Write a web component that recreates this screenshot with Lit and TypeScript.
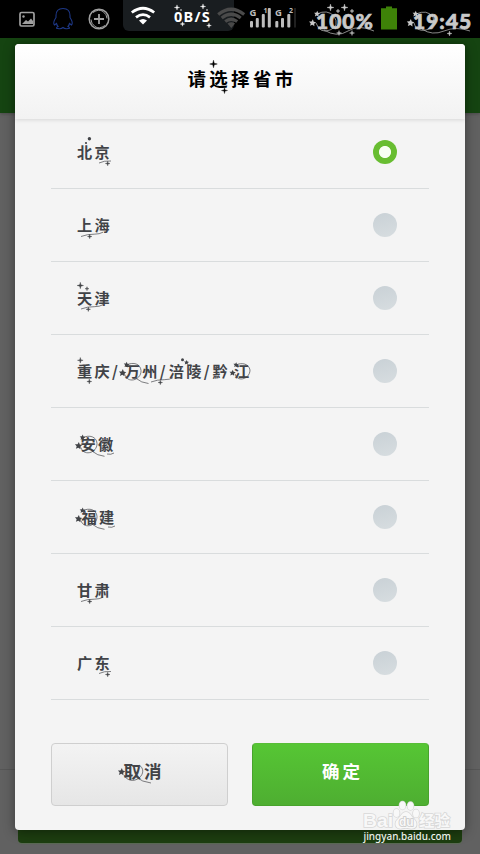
import { LitElement, html, svg, css } from "lit";
import { customElement, state } from "lit/decorators.js";

const spark = (x: number, y: number, r: number) => {
  const q = r * 0.2;
  return svg`<path d="M${x} ${y - r}L${x + q} ${y - q}L${x + r} ${y}L${x + q} ${y + q}L${x} ${y + r}L${x - q} ${y + q}L${x - r} ${y}L${x - q} ${y - q}Z" stroke="currentColor" stroke-width=".4"/>`;
};
const star = (x: number, y: number, r: number) => {
  const pts = Array.from({ length: 10 }, (_, i) => {
    const a = -Math.PI / 2 + 0.1 + (i * Math.PI) / 5;
    const k = i % 2 ? r * 0.48 : r;
    return `${(x + k * Math.cos(a)).toFixed(2)},${(y + k * Math.sin(a)).toFixed(2)}`;
  });
  return svg`<polygon points=${pts.join(" ")}/>`;
};
const dot = (x: number, y: number, r: number) => svg`<circle cx=${x} cy=${y} r=${r}/>`;
const line = (d: string) => svg`<path class="thin" d=${d}/>`;
const swoosh = (x: number, y: number, w: number) =>
  line(`M${x} ${y}q${w * 0.3} -2.5 ${w * 0.6} -2.3q${w * 0.25} 0 ${w * 0.4} -2`);
const orbit = (x: number, y: number) => svg`
  ${star(x, y, 3.9)}${star(x + 4, y - 8.2, 3)}
  ${line(`M${x + 4} ${y - 8}c7 -3.500 14 -1 14.500 5.500c.4 5 -4 9.500 -9 9.500c-4 0 -6 -2 -8 -7`)}
  ${line(`M${x + 13} ${y + 5}q6 5 13 5.500`)}`;

interface Region {
  parts: { text: string; lead: number }[];
  art: unknown;
}

const regions: Region[] = [
  { parts: [{ text: "北京", lead: 0 }], art: [dot(38.4, 22.7, 1.7), dot(35, 27, 1.1), line("M48 47q5 -2.500 12 -2"), spark(56.7, 47.5, 2.3)] },
  { parts: [{ text: "上海", lead: 0 }], art: [swoosh(30, 47.5, 22), spark(38.7, 47.5, 2.2)] },
  { parts: [{ text: "天津", lead: 0 }], art: [spark(29.3, 23.5, 3.2), spark(36, 26.7, 2), swoosh(30, 47, 22), spark(37.3, 47.3, 2.2)] },
  {
    parts: [{ text: "重庆/", lead: 0 }, { text: "万州/", lead: 4.5 }, { text: "涪陵/", lead: 1 }, { text: "黔", lead: 0.5 }, { text: "江", lead: 4 }],
    art: [
      spark(29.3, 25.3, 2.8), spark(38.3, 46.5, 2.4), orbit(71.5, 38), swoosh(100, 47, 22),
      spark(109.3, 47.5, 2.2), dot(131.5, 24.7, 1.5), star(135.5, 27.5, 2.6), star(181.5, 38, 3.3), star(185, 30, 2.8),
      line("M185 30c6 -3 13 -1 14 5c0 5 -4 9 -9 9c-3 0 -5 -2 -6 -5"),
    ],
  },
  { parts: [{ text: "安徽", lead: 3.5 }], art: [orbit(27.5, 37.8), line("M56 46q4 1 7 -1")] },
  { parts: [{ text: "福建", lead: 4.5 }], art: [orbit(27.5, 37.8), line("M57 46q4 1 7 -1")] },
  { parts: [{ text: "甘肃", lead: 0 }], art: [swoosh(30, 47.5, 22), spark(38.7, 47.5, 2.2)] },
  { parts: [{ text: "广东", lead: 0 }], art: [line("M48 46.500q5 -2.500 12 -2"), spark(56.7, 47.5, 2.3)] },
];

const art = css`
  .art { position: absolute; left: 0; top: 0; width: 100%; height: 100%; overflow: visible; fill: currentColor; pointer-events: none; }
  .thin { fill: none; stroke: currentColor; stroke-width: 0.8; opacity: 0.85; }
`;

@customElement("status-bar")
export class StatusBar extends LitElement {
  static styles = [art, css`
    :host { display: grid; grid-template-columns: 123px 111px 82px 65px 32px 1fr; height: 38px; background: #000; color: #c9c9c9; position: relative; overflow: hidden; }
    svg { display: block; }
    .panel { background: #191d20; border-radius: 0 0 6px 6px; height: 31px; display: flex; color: #fff; }
    .speed { font: 700 14.5px/31px "Noto Sans", sans-serif; letter-spacing: 1.3px; margin-left: 17px; padding-top: 1px; height: 29px; white-space: nowrap; }
    .num { font: 900 21px/38px Lato, "Open Sans", sans-serif; padding-top: 2px; letter-spacing: 1px; -webkit-text-stroke: 0.7px #c9c9c9; white-space: nowrap; }
    .signal { font: 700 9.5px "Open Sans", sans-serif; overflow: visible; }
    .small { font-size: 7px; }
    .fan { fill: #484848; stroke: none; }
  `];
  render() {
    return html`
      <svg width="123" height="38" fill="none" stroke="#a0a0a0">
        <rect x="20" y="12.500" width="14" height="13.500" rx="1.500" stroke-width="1.700"/>
        <path d="M22 24l4-4 2 1.500 3-3 2 2.500v3z" fill="#a0a0a0" stroke="none"/>
        <circle cx="23.500" cy="16.500" r="1.200" fill="#a0a0a0" stroke="none"/>
        <path d="M63 8.500c-5 0-7 3-7 7v2c-2 3-3 6-1.500 7.500l2-1.500c.5 2 1 2.500 1.500 3-2 1-2 2 0 2 2 .5 4 0 5-1 1 1 3 1.500 5 1 2 0 2-1 0-2 .5-.5 1-1 1.500-3l2 1.500c1.500-1.500.5-4.500-1.500-7.500v-2c0-4-2-7-7-7z" stroke="#1d3785" stroke-width="1.100"/>
        <circle cx="99" cy="19" r="9.800" stroke-width="1.500"/>
        <path d="M94 19h10M99 14v10" stroke-width="1.800"/>
        <path d="M93 12.500q6-4 10-1t4 7M105 25.500q-6 4-10 1t-4-7" stroke-width="1"/>
      </svg>
      <div class="panel">
        <svg width="34" height="31" fill="none" stroke="#fff" stroke-width="2.800">
          <path d="M8.800 12.500q11.200-8.400 22.400 0M13 17.300q7-5.400 14 0"/>
          <path d="M16 20.500q4-3 8 0l-4 4z" fill="#fff" stroke="none"/>
        </svg>
        <span class="speed">0B/S</span>
      </div>
      <svg class="signal" width="82" height="38" fill="#bdbdbd">
        <g fill="none" stroke="#4a4a4a" stroke-width="3.200">
          <path d="M-15.800 14.500q13-10.500 26 0M-12.300 18q9.500-7.500 19 0M-8.800 21.500q6-4.500 12 0"/>
          <path class="fan" d="M-6.500 23.500q3.800-2.500 7.600 0l-3.800 4.500z"/>
        </g>
        <text x="15.500" y="15.500">G</text><text class="small" x="29.500" y="13">1</text>
        <text x="41" y="15.500">G</text><text class="small" x="55" y="13">2</text>
        <g><rect x="16" y="21" width="3" height="6.500" rx="1"/><rect x="21.800" y="18" width="3" height="9.500" rx="1"/><rect x="27.800" y="14" width="3" height="13.500" rx="1"/><rect x="33.800" y="8" width="3" height="19.500" rx="1"/>
        <rect x="41.300" y="21" width="3" height="6.500" rx="1"/><rect x="47" y="18" width="3" height="9.500" rx="1"/><rect x="53.300" y="14" width="3" height="13.500" rx="1"/><rect x="60" y="8" width="2" height="19.500" fill="#202020"/></g>
      </svg>
      <span class="num">100%</span>
      <svg width="32" height="38"><path d="M5 6.500h6v1.800h5v21.200H0V8.300h5z" fill="#3e8208"/></svg>
      <span class="num">19:45</span>
      <svg class="art" viewBox="0 0 480 38">
        <g color="#fff" fill="#fff">${spark(177, 7.5, 2.6)}${spark(182.500, 24, 2.2)}${spark(203, 6.5, 2.6)}${spark(209, 25.5, 2.3)}${dot(181, 10, 0.8)}${dot(207, 10, 0.8)}</g>
        ${star(312.500, 23, 3.8)}${star(317, 14, 3.2)}${spark(330.500, 7.5, 3.5)}${spark(344.500, 7.5, 3.5)}${spark(338, 11, 2)}${spark(352, 11, 2)}${spark(339, 33, 2.5)}${spark(352, 33, 2.5)}
        ${line("M317 14q10-5 17 2q6 10-4 14t-14-7M324 30q13 8 24 1t26 0")}
        ${star(410.500, 23, 4)}${star(415.500, 14, 3.2)}${spark(455, 23, 3.5)}${spark(449.500, 33.5, 2.5)}
        ${line("M416 14q11-5 17 3q3 11-7 13t-12-7M422 29q10 7 22 2t26 0")}
      </svg>`;
  }
}

@customElement("choice-row")
export class ChoiceRow extends LitElement {
  static properties = { region: { attribute: false }, checked: { type: Boolean } };
  declare region: Region;
  declare checked: boolean;
  static styles = [art, css`
    :host { position: relative; display: flex; align-items: center; justify-content: space-between; height: 73px; box-sizing: border-box; border-bottom: 1px solid #d9dcdd; padding: 0 32px 0 26px; color: #414347; cursor: pointer; }
    .label { display: flex; margin-bottom: 2px; font: 700 15.2px/20px "Noto Sans CJK SC", sans-serif; letter-spacing: 2.3px; }
    .radio { width: 24px; height: 24px; border-radius: 50%; background: linear-gradient(165deg, #c9d1d6, #d7dde0); }
    .on { background: radial-gradient(circle, #f8fff3 5.6px, #68bd31 6.500px); }
  `];
  render() {
    return html`
      <span class="label">${this.region.parts.map((p) => html`<span style="padding-left:${p.lead}px">${p.text}</span>`)}</span>
      <span class="radio ${this.checked ? "on" : ""}"></span>
      <svg class="art" viewBox="0 0 378 72">${this.region.art}</svg>`;
  }
}

@customElement("app-root")
export class AppRoot extends LitElement {
  @state() selected = 0;
  static styles = [art, css`
    :host { display: block; position: relative; width: 480px; height: 854px; overflow: hidden; background: #616161; font-family: "Noto Sans CJK SC", sans-serif; }
    .toolbar { height: 75px; background: #154411; box-shadow: 0 1px 3px #4a4a4a; }
    .page { height: 656px; border-bottom: 1px solid #565656; }
    .submit { height: 40px; margin: 33px 18px 0; background: #1d3e10; border-radius: 4px; box-shadow: 0 1px 1px #5a6b54; }
    .dialog { position: absolute; left: 15px; top: 44px; width: 450px; height: 786px; border-radius: 4px; background: #f4f4f4; box-shadow: 0 2px 12px rgba(0, 0, 0, 0.4); }
    .head { position: relative; height: 75px; border-radius: 4px 4px 0 0; background: linear-gradient(#fff, #f2f2f2); box-shadow: 0 1px 4px rgba(0, 0, 0, 0.12); z-index: 1; display: flex; justify-content: center; }
    h1 { margin: 0; padding-left: 4px; font-size: 18.5px; font-weight: 700; line-height: 69px; letter-spacing: 3.3px; color: #000; }
    .list { margin: -3px 36px 0; }
    .actions { display: grid; grid-template-columns: 1fr 1fr; gap: 24px; margin: 43px 36px 0; }
    button { position: relative; height: 63px; box-sizing: border-box; padding: 0 0 7px 0; border-radius: 4px; font: 700 17.5px/24px "Noto Sans CJK SC", sans-serif; letter-spacing: 3px; }
    .cancel { border: 1px solid #cfcfcf; background: linear-gradient(#f3f3f3, #e6e6e6); color: #424347; padding-left: 9px; }
    .ok { border: 1px solid #48a32c; border-top-color: #58bd37; background: linear-gradient(#56c634, #4eae31); color: #fff; padding-left: 4px; }
    .mark { position: absolute; left: 360px; top: 798px; }
    .brand { font: 700 18.5px "Liberation Sans", sans-serif; fill: #f8f8f8; stroke: #d8d8d8; stroke-width: 1.6px; paint-order: stroke; }
    .zh { font: 700 15px "Noto Sans CJK SC", sans-serif; }
    .du { font-size: 12px; fill: #f8f8f8; stroke: #c9c9c9; }
    .url { font: 500 10.5px "Noto Sans", sans-serif; fill: #eef2ed; }
  `];
  render() {
    return html`
      <status-bar></status-bar>
      <div class="toolbar"></div>
      <div class="page"></div>
      <div class="submit"></div>
      <section class="dialog">
        <header class="head">
          <h1>请选择省市</h1>
          <svg class="art" viewBox="0 0 450 75">${spark(198.500, 20, 3.8)}${spark(209.500, 46.5, 3)}</svg>
        </header>
        <div class="list">
          ${regions.map((r, i) => html`<choice-row .region=${r} .checked=${this.selected === i} @click=${() => (this.selected = i)}></choice-row>`)}
        </div>
        <div class="actions">
          <button class="cancel">取消
            <svg class="art" viewBox="0 0 175 61">${star(69.500, 28, 3.9)}${line("M72 31c3 6 10 7 15 3s5-10 0-13M84 33q6 5 15 6")}</svg>
          </button>
          <button class="ok">确定</button>
        </div>
      </section>
      <svg class="mark" width="96" height="48">
        <g class="brand">
          <text x="3" y="29" textLength="30" lengthAdjust="spacingAndGlyphs">Bai</text>
          <ellipse cx="36.500" cy="15" rx="3" ry="4"/><ellipse cx="42.500" cy="7.500" rx="3" ry="4"/><ellipse cx="50.500" cy="8" rx="3" ry="4"/><ellipse cx="56" cy="15.500" rx="3" ry="4"/>
          <path d="M46 14c4 0 5 4 8 7 4 4 3 9-1 9.500-3 .5-4-.5-7-.5s-5 1-7 .5c-4-1-5-6-1-9.500 3-3 4-7 8-7z"/>
          <text class="du" x="39" y="27.500">du</text>
          <text class="zh" x="59" y="28" textLength="31" lengthAdjust="spacingAndGlyphs">经验</text>
        </g>
        <text class="url" x="3.500" y="42" textLength="87.500" lengthAdjust="spacingAndGlyphs">jingyan.baidu.com</text>
      </svg>`;
  }
}
